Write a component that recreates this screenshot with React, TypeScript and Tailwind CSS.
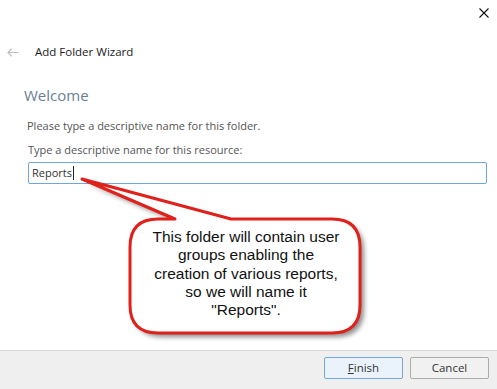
import React from "react"

const font = { fontFamily: '"Open Sans", "Noto Sans", sans-serif' }

function Callout() {
  // bubble outline with pointer towards the text box
  const d =
    "M158 219 L175 219 L82 179 L231 219 L332 219 Q360 219 360 247 L360 305 Q360 333 332 333 L158 333 Q130 333 130 305 L130 247 Q130 219 158 219 Z"
  return (
    <div className="absolute left-0 top-0 w-[497px] h-[389px] pointer-events-none">
      <svg width="497" height="389" className="absolute left-0 top-0">
        <defs>
          <filter id="sh" x="-20%" y="-20%" width="140%" height="140%">
            <feGaussianBlur stdDeviation="2.5" />
          </filter>
        </defs>
        <path d={d} transform="translate(4 4)" fill="#000" opacity="0.45" filter="url(#sh)" />
        <path d={d} fill="#fff" stroke="#e0201b" strokeWidth="3" strokeLinejoin="round" />
      </svg>
      <div
        className="absolute left-[128px] top-[228px] w-[236px] text-center text-[15.5px] leading-[18.3px] text-[#111]"
        style={{ fontFamily: '"Liberation Sans", Arial, sans-serif' }}
      >
        This folder will contain user
        <br />
        groups enabling the
        <br />
        creation of various reports,
        <br />
        so we will name it
        <br />
        "Reports".
      </div>
    </div>
  )
}

export default function App() {
  return (
    <div className="relative w-[497px] h-[389px] bg-white flex flex-col overflow-hidden" style={font}>
      <div className="flex justify-end pt-[8px] pr-[8px]">
        <svg width="10" height="10" viewBox="0 0 10 10">
          <path d="M0.5 0.5 L9.5 9.5 M9.5 0.5 L0.5 9.5" stroke="#111" strokeWidth="1.1" />
        </svg>
      </div>

      <div className="flex items-center mt-[26px] h-[16px]">
        <svg width="12" height="9" viewBox="0 0 12 9" className="ml-[7px]">
          <path d="M11.5 4.5 H1 M4.8 0.7 L1 4.5 L4.8 8.3" fill="none" stroke="#bdbdbd" strokeWidth="1.2" />
        </svg>
        <span className="ml-[16px] text-[11.5px] text-[#1a1a1a]">Add Folder Wizard</span>
      </div>

      <div className="px-[24px] mt-[25px] flex flex-col">
        <div className="text-[15px] leading-[20px] text-[#6b7e94]">Welcome</div>
        <div className="mt-[14px] pl-[3px] text-[11px] leading-[14px] text-[#555]">
          Please type a descriptive name for this folder.
        </div>
        <div className="mt-[10px] pl-[4px] text-[11px] leading-[14px] text-[#555]">
          Type a descriptive name for this resource:
        </div>
        <div className="mt-[5px] ml-[4px] mr-[-14px] h-[22px] border border-[#6fa6de] rounded-[2px] flex items-center px-[3px]">
          <span className="text-[11px] text-[#333]">Reports</span>
          <span className="w-px h-[14px] bg-[#222] ml-[1px]" />
        </div>
      </div>

      <div className="mt-auto h-[39px] bg-[#efefef] border-t border-[#dcdcdc] flex items-start justify-end gap-[7px] pt-[6px] pr-[8px]">
        <button className="w-[79px] h-[22px] rounded-[2px] border border-[#74a7d8] bg-[#eaf3fb] text-[11.5px] text-[#333]">
          <span className="underline">F</span>inish
        </button>
        <button className="w-[79px] h-[22px] rounded-[2px] border border-[#acacac] bg-[#f1f1f1] text-[11.5px] text-[#333]">
          Cancel
        </button>
      </div>

      <Callout />
    </div>
  )
}
